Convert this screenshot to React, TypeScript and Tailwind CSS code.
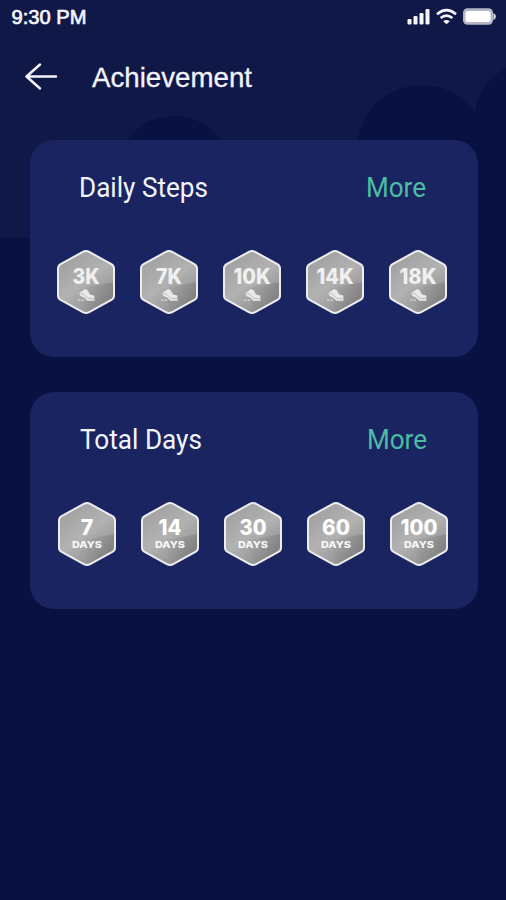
type BadgeProps = {
  value: string
  width: number
  unit?: string
}

const sections = [
  {
    title: "Daily Steps",
    titleWidth: 129,
    badges: [
      { value: "3K", width: 27 },
      { value: "7K", width: 26 },
      { value: "10K", width: 37 },
      { value: "14K", width: 37 },
      { value: "18K", width: 37 },
    ],
  },
  {
    title: "Total Days",
    titleWidth: 122,
    badges: [
      { value: "7", width: 12.5, unit: "DAYS" },
      { value: "14", width: 23, unit: "DAYS" },
      { value: "30", width: 27, unit: "DAYS" },
      { value: "60", width: 28, unit: "DAYS" },
      { value: "100", width: 37, unit: "DAYS" },
    ],
  },
]

function Shoe() {
  return (
    <g>
      <path d="M23.4 44 L29 40 L31.5 41 L34 45.6 L38.2 46.6 L38.6 51.8 H31.4 L28 48.6 L24.4 47 Z" fill="#e9e9e9" />
      <path d="M24.4 44.6 L27.4 45 L32 49.4 L38.4 49.8" fill="none" stroke="#aaa" strokeWidth="0.7" />
      <path d="M22 50.4h2.4v1.3h-2.4z M25.6 50.4h2.6v1.3h-2.6z" fill="#d8d8d8" />
    </g>
  )
}

function Badge({ value, width, unit }: BadgeProps) {
  return (
    <svg className="h-[66px] w-[60px]" viewBox="0 0 60 66">
      <defs>
        <linearGradient id="silver" x1="0.1" y1="0.1" x2="0.7" y2="1">
          <stop offset="0" stopColor="#a0a0a0" />
          <stop offset="0.5" stopColor="#b2b2b2" />
          <stop offset="1" stopColor="#8c8c8c" />
        </linearGradient>
        <linearGradient id="shade" x1="0" y1="0" x2="1" y2="0">
          <stop offset="0" stopColor="#555" stopOpacity="0" />
          <stop offset="1" stopColor="#555" stopOpacity="0.28" />
        </linearGradient>
      </defs>
      <path
        d="M26.8 2.9 Q30 1.1 33.2 2.9 L55.4 15.1 Q58 16.6 58 19.6 V46.4 Q58 49.4 55.4 50.9 L33.2 63.1 Q30 64.9 26.8 63.1 L4.6 50.9 Q2 49.4 2 46.4 V19.6 Q2 16.6 4.6 15.1 Z"
        fill="url(#silver)"
      />
      <path d="M22 40 L42 36 L58 33 V49 L32 63 Z" fill="url(#shade)" />
      <path
        d="M26.8 2.9 Q30 1.1 33.2 2.9 L55.4 15.1 Q58 16.6 58 19.6 V46.4 Q58 49.4 55.4 50.9 L33.2 63.1 Q30 64.9 26.8 63.1 L4.6 50.9 Q2 49.4 2 46.4 V19.6 Q2 16.6 4.6 15.1 Z"
        fill="none"
        stroke="#ededf0"
        strokeWidth="2"
      />
      <text
        x="30"
        y={unit ? 33.5 : 35}
        textAnchor="middle"
        textLength={width}
        lengthAdjust="spacingAndGlyphs"
        className={unit ? "fill-white font-['Inter',sans-serif] text-[21px] font-extrabold" : "fill-[#f0f0f0] font-['Inter',sans-serif] text-[21px] font-extrabold"}
      >
        {value}
      </text>
      {unit ? (
        <text
          x="30"
          y="47"
          textAnchor="middle"
          textLength="30"
          lengthAdjust="spacingAndGlyphs"
          className="fill-[#f8f8f8] font-['Inter',sans-serif] text-[9.5px] font-extrabold"
        >
          {unit}
        </text>
      ) : (
        <Shoe />
      )}
    </svg>
  )
}

function StatusIcons() {
  return (
    <svg className="h-5 w-[90px]" viewBox="0 0 90 20" fill="none">
      <g fill="#f5f6fb">
        <rect x="1.5" y="12" width="4" height="5.5" rx="1.2" />
        <rect x="7.5" y="9" width="4" height="8.5" rx="1.2" />
        <rect x="13.5" y="6" width="4" height="11.5" rx="1.2" />
        <rect x="19.5" y="2" width="4" height="15.5" rx="1.2" />
      </g>
      <g stroke="#f5f6fb" strokeWidth="2.6">
        <path d="M31 7.2 Q40.5 -0.8 50 7.2" />
        <path d="M34.6 11 Q40.5 6.2 46.4 11" />
      </g>
      <path d="M37.2 14.2 Q40.5 11.6 43.8 14.2 L40.5 17.2 Z" fill="#f5f6fb" />
      <rect x="57" y="1.2" width="30" height="16.6" rx="4.5" fill="#b5b7c4" />
      <path d="M87.3 6 Q90 7 90 9.5 Q90 12 87.3 13 Z" fill="#d2d4dd" />
      <rect x="59.5" y="3.9" width="25" height="11.2" rx="2.5" fill="#fff" />
    </svg>
  )
}

export default function App() {
  return (
    <div className="relative isolate h-[900px] w-[506px] overflow-hidden bg-[#091142] font-['Roboto',sans-serif] text-[#f3f4fb]">
      {/* Night sky with dark cloud shapes */}
      <svg className="absolute inset-0 -z-10" width="506" height="900" viewBox="0 0 506 900">
        <rect width="506" height="260" fill="#101848" />
        <g fill="#091142">
          <circle cx="174" cy="173" r="57" />
          <circle cx="422" cy="150" r="65" />
          <circle cx="536" cy="122" r="62" />
          <rect x="440" y="120" width="66" height="160" />
          <ellipse cx="15" cy="300" rx="90" ry="63" />
          <rect y="258" width="506" height="10" />
        </g>
      </svg>

      <div className="flex h-[34px] items-center justify-between pr-[10px] pl-[11px]">
        <svg className="h-[26px] w-[80px]" viewBox="0 0 80 26">
          <text x="0.5" y="20" textLength="75" className="fill-[#f3f4fb] font-['Liberation_Sans',sans-serif] text-[20px] font-normal" stroke="#f3f4fb" strokeWidth="0.7" lengthAdjust="spacingAndGlyphs">
            9:30 PM
          </text>
        </svg>
        <StatusIcons />
      </div>

      <header className="flex h-[106px] items-start pt-[23px] pl-[24px]">
        <svg className="mt-[4px] h-[32px] w-[34px]" viewBox="0 0 34 32" fill="none" stroke="#f3f4fb" strokeWidth="2.5" strokeLinecap="round" strokeLinejoin="round">
          <path d="M16 3.5 L2.5 15.5 L16 27.5 M2.5 15.5 H32" />
        </svg>
        <svg className="ml-[33px] h-[40px] w-[170px]" viewBox="0 0 170 40">
          <text x="1" y="29.5" textLength="160" lengthAdjust="spacingAndGlyphs" stroke="#f3f4fb" strokeWidth="0.3" className="fill-[#f3f4fb] font-['Liberation_Sans',sans-serif] text-[28px]">
            Achievement
          </text>
        </svg>
      </header>

      <main className="flex flex-col gap-[35px] pr-[28px] pl-[30px]">
        {sections.map((section, index) => (
          <section key={section.title} className="h-[217px] rounded-[24px] bg-[#1a2461]">
            <div className={index === 0 ? "flex justify-between pt-[28px] pr-[50px] pl-[48px]" : "flex justify-between pt-[28px] pr-[49px] pl-[49px]"}>
              <svg className="h-[40px] w-[140px]" viewBox="0 0 140 40">
                <text x="1" y="29" textLength={section.titleWidth} lengthAdjust="spacingAndGlyphs" className="fill-[#f3f4fb] text-[27px]">
                  {section.title}
                </text>
              </svg>
              <svg className="h-[40px] w-[64px]" viewBox="0 0 64 40">
                <text x="2" y="29" textLength="60" lengthAdjust="spacingAndGlyphs" className="fill-[#4cbca2] text-[27px]">
                  More
                </text>
              </svg>
            </div>
            <div className={index === 0 ? "mt-[41px] flex gap-[23.1px] pl-[26px]" : "mt-[41px] flex gap-[23.1px] pl-[27px]"}>
              {section.badges.map((badge) => (
                <Badge key={badge.value} {...badge} />
              ))}
            </div>
          </section>
        ))}
      </main>
    </div>
  )
}
